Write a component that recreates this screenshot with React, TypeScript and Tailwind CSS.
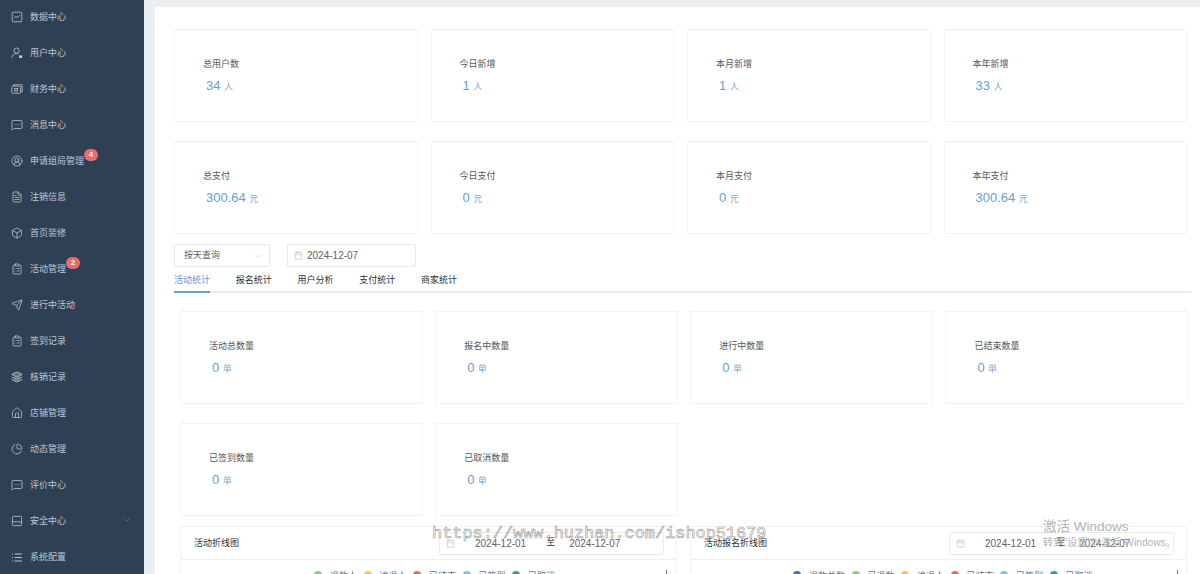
import React from "react";
import {
  MessageSquareMore,
  CircleUserRound,
  FileText,
  Box,
  ClipboardList,
  Send,
  Layers,
  House,
  ChartPie,
  List,
  ChevronDown,
  Calendar,
} from "lucide-react";

const ic = { size: 12, strokeWidth: 1.5 };

function DataIcon() {
  return (
    <svg width="12" height="12" viewBox="0 0 12 12" fill="none" stroke="currentColor" strokeWidth="0.8">
      <rect x="1.2" y="1.2" width="9.6" height="9.6" rx="1" />
      <path d="M3 7l1.8-1.6 1.6 1 2.4-2" />
    </svg>
  );
}
function UserIcon() {
  return (
    <svg width="12" height="12" viewBox="0 0 12 12" fill="none" stroke="currentColor" strokeWidth="0.8">
      <circle cx="5.5" cy="3.6" r="2.6" />
      <path d="M0.8 11c0.3-2.6 2-4.4 4.7-4.4 0.8 0 1.4 0.1 2 0.4" />
      <rect x="8" y="8.4" width="3.2" height="2.6" fill="currentColor" stroke="none" />
    </svg>
  );
}
function WalletIcon() {
  return (
    <svg width="12" height="12" viewBox="0 0 12 12" fill="none" stroke="currentColor" strokeWidth="0.8">
      <rect x="0.8" y="3.2" width="8.8" height="7" rx="1" />
      <path d="M2.6 3V1.8h8.6v7H9.6" />
      <rect x="3.8" y="5.4" width="2.8" height="2.6" />
    </svg>
  );
}
function TrayIcon() {
  return (
    <svg width="12" height="12" viewBox="0 0 12 12" fill="none" stroke="currentColor" strokeWidth="0.8">
      <path d="M2.4 1.4h7.2a1 1 0 0 1 1 1v7.2a1 1 0 0 1-1 1H2.4a1 1 0 0 1-1-1V2.4a1 1 0 0 1 1-1z" />
      <path d="M1.4 6.8h9.2" />
    </svg>
  );
}

const menu: { label: string; icon: React.ReactNode; badge?: string; arrow?: boolean }[] = [
  { label: "数据中心", icon: <DataIcon /> },
  { label: "用户中心", icon: <UserIcon /> },
  { label: "财务中心", icon: <WalletIcon /> },
  { label: "消息中心", icon: <MessageSquareMore {...ic} /> },
  { label: "申请组局管理", icon: <CircleUserRound {...ic} />, badge: "4" },
  { label: "注销信息", icon: <FileText {...ic} /> },
  { label: "首页装修", icon: <Box {...ic} /> },
  { label: "活动管理", icon: <ClipboardList {...ic} />, badge: "2" },
  { label: "进行中活动", icon: <Send {...ic} /> },
  { label: "签到记录", icon: <ClipboardList {...ic} /> },
  { label: "核销记录", icon: <Layers {...ic} fill="currentColor" fillOpacity={0.4} /> },
  { label: "店铺管理", icon: <House {...ic} /> },
  { label: "动态管理", icon: <ChartPie {...ic} /> },
  { label: "评价中心", icon: <MessageSquareMore {...ic} /> },
  { label: "安全中心", icon: <TrayIcon />, arrow: true },
  { label: "系统配置", icon: <List size={13} strokeWidth={2} /> },
];

function Stat({ label, value, unit }: { label: string; value: string; unit: string }) {
  return (
    <div className="h-[93px] border border-[#f1f3f5] bg-white pl-[28px] pt-[28px]">
      <div className="h-[12px] text-[9px] leading-[12px] text-[#55585e]">{label}</div>
      <div className="ml-[3px] mt-[8px] flex h-[16px] items-center gap-[3.5px] text-[#6a9dd2]">
        <span className="text-[13px] leading-[16px]">{value}</span>
        <span className="pt-[2px] text-[9px] leading-[12px] text-[#7fa9d6]">{unit}</span>
      </div>
    </div>
  );
}

function RangeBox() {
  return (
    <div className="flex h-[23px] w-[225px] items-center rounded-[2px] border border-[#e9ebef] bg-white pl-[6px] text-[10px] text-[#606266]">
      <Calendar size={9} strokeWidth={1.6} className="text-[#b8bcc4]" />
      <span className="ml-[20px]">2024-12-01</span>
      <span className="ml-[20px] text-[9px] text-[#303133]">至</span>
      <span className="ml-[14px]">2024-12-07</span>
    </div>
  );
}

function ChartCard({
  title,
  legend,
  pad,
  tick,
}: {
  title: string;
  legend: { t: string; c: string }[];
  pad: string;
  tick: string;
}) {
  return (
    <div className="relative h-[60px] rounded-[2px] border border-[#f0f2f4] bg-white">
      <div className="flex h-[33px] items-center justify-between border-b border-[#eff1f3] pl-[13px] pr-[12px]">
        <span className="pt-[2px] text-[9px] text-[#303133]">{title}</span>
        <RangeBox />
      </div>
      <div className={`flex gap-[6.5px] pt-[11px] ${pad}`}>
        {legend.map((l) => (
          <div key={l.t} className="flex items-start gap-[8px] text-[9px] leading-[9px] text-[#6f7278]">
            <span className="h-[8px] w-[8px] rounded-full" style={{ background: l.c }} />
            <span className="pt-px">{l.t}</span>
          </div>
        ))}
      </div>
      <span className={`absolute top-[43px] h-[6px] w-px bg-[#777] ${tick}`} />
    </div>
  );
}

const row1 = [
  ["总用户数", "34", "人"],
  ["今日新增", "1", "人"],
  ["本月新增", "1", "人"],
  ["本年新增", "33", "人"],
];
const row2 = [
  ["总支付", "300.64", "元"],
  ["今日支付", "0", "元"],
  ["本月支付", "0", "元"],
  ["本年支付", "300.64", "元"],
];
const inner = [
  ["活动总数量", "0", "单"],
  ["报名中数量", "0", "单"],
  ["进行中数量", "0", "单"],
  ["已结束数量", "0", "单"],
  ["已签到数量", "0", "单"],
  ["已取消数量", "0", "单"],
];

export default function App() {
  return (
    <div className="relative flex h-[574px] w-[1200px] overflow-hidden bg-[#ebeff1] font-['Liberation_Sans','Noto_Sans_CJK_SC',sans-serif]">
      <aside className="w-[144px] shrink-0 bg-[#2f4055] text-[#bcc7d3]">
        <div className="-mt-[1px]">
          {menu.map((m) => (
            <div key={m.label} className="flex h-[36px] items-center pl-[11px] pr-[12px]">
              <span className="flex w-[12px] justify-center">{m.icon}</span>
              <span className="relative ml-[7px] text-[9px] leading-[12px]">
                {m.label}
                {m.badge && (
                  <span className="absolute left-full -top-[6px] flex h-[12px] w-[14px] items-center justify-center rounded-full bg-[#ec6b6b] text-[8px] font-bold leading-none text-white">
                    {m.badge}
                  </span>
                )}
              </span>
              {m.arrow && <ChevronDown size={10} strokeWidth={1.5} className="ml-auto -mt-[3px] opacity-50" />}
            </div>
          ))}
        </div>
      </aside>

      <main className="ml-[11px] mt-[7px] flex-1 overflow-hidden bg-white pl-[19px] pr-[13px] pt-[22px]">
        <div className="grid grid-cols-4 gap-[13px]">
          {row1.map(([a, b, c]) => (
            <Stat key={a} label={a} value={b} unit={c} />
          ))}
        </div>
        <div className="mt-[19px] grid grid-cols-4 gap-[13px]">
          {row2.map(([a, b, c]) => (
            <Stat key={a} label={a} value={b} unit={c} />
          ))}
        </div>

        <div className="mt-[10px] flex gap-[17px]">
          <div className="flex h-[23px] w-[96px] items-center justify-between rounded-[2px] border border-[#e6e8ec] pl-[9px] pr-[6px] text-[9px] text-[#606266]">
            <span className="pt-px">按天查询</span>
            <ChevronDown size={10} strokeWidth={1.3} className="text-[#b8bcc4]" />
          </div>
          <div className="flex h-[23px] w-[129px] items-center rounded-[2px] border border-[#e6e8ec] pl-[6px] text-[10px] text-[#606266]">
            <Calendar size={9} strokeWidth={1.6} className="text-[#b8bcc4]" />
            <span className="ml-[4px]">2024-12-07</span>
          </div>
        </div>

        <div className="-mr-[5px] mt-[1px] flex h-[25px] items-start gap-[25.75px] border-b-2 border-[#e9edf0] text-[9px] leading-[24px] text-[#303133]">
          {["活动统计", "报名统计", "用户分析", "支付统计", "商家统计"].map((t, i) => (
            <span
              key={t}
              className={
                i === 0
                  ? "-mb-[2px] h-[25px] border-b-2 border-[#6a9dd2] text-[#5f98d0]"
                  : "h-[23px]"
              }
            >
              {t}
            </span>
          ))}
        </div>

        <div className="mt-[18px] pl-[6px]">
          <div className="-mr-px grid grid-cols-4 gap-x-[12.5px] gap-y-[19px]">
            {inner.map(([a, b, c]) => (
              <Stat key={a} label={a} value={b} unit={c} />
            ))}
          </div>
          <div className="mt-[10px] grid grid-cols-2 gap-[13px]">
            <ChartCard
              title="活动折线图"
              pad="pl-[133px]"
              tick="right-[9px]"
              legend={[
                { t: "退款人", c: "#8fc98f" },
                { t: "进退人", c: "#f0c75e" },
                { t: "已结束", c: "#e06c6c" },
                { t: "已签到", c: "#7fc4de" },
                { t: "已取消", c: "#3f9e83" },
              ]}
            />
            <ChartCard
              title="活动报名折线图"
              pad="pl-[102px]"
              tick="right-[8px]"
              legend={[
                { t: "退款总数", c: "#4f6fb0" },
                { t: "已退数", c: "#8fc98f" },
                { t: "进退人", c: "#f0c75e" },
                { t: "已结束", c: "#e06c6c" },
                { t: "已签到", c: "#7fc4de" },
                { t: "已取消", c: "#3f9e83" },
              ]}
            />
          </div>
        </div>
      </main>

      <div className="pointer-events-none absolute left-[432px] top-[523px] font-['Liberation_Mono',monospace] text-[16.9px] leading-[22px] text-transparent [-webkit-text-stroke:0.6px_#999999]">
        https://www.huzhan.com/ishop51679
      </div>
      <div className="pointer-events-none absolute left-[1043px] top-[519px] text-[13.5px] leading-[16px] text-[#b4b4b4]">
        激活 Windows
      </div>
      <div className="pointer-events-none absolute left-[1043px] top-[536px] text-[10.2px] leading-[14px] text-[#b4b4b4]">
        转到"设置"以激活 Windows。
      </div>
    </div>
  );
}
